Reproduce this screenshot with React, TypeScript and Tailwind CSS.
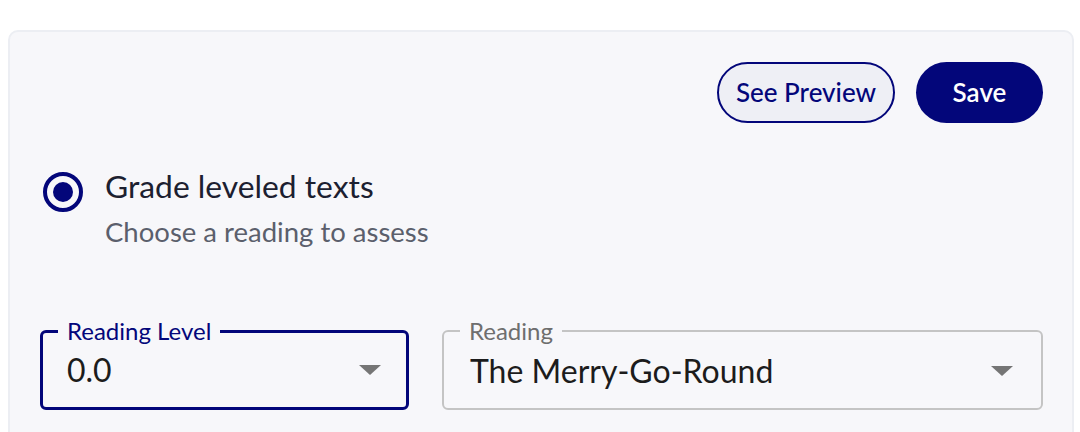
import React from "react";

function Caret() {
  return (
    <svg width="24" height="12" viewBox="0 0 24 12" className="shrink-0">
      <path d="M1 1 L23 1 L12 11 Z" fill="#757575" />
    </svg>
  );
}

export default function App() {
  return (
    <div className="w-[1080px] h-[432px] bg-white overflow-hidden" style={{ fontFamily: "Lato, 'Noto Sans', sans-serif" }}>
      <div className="mt-[30px] ml-[8px] mr-[6px] h-[420px] rounded-[10px] border-2 border-[#eceef3] bg-[#f7f7fa] pl-[30px] pr-[29px] pt-[30px]">
        <div className="flex justify-end gap-[21px]">
          <button className="h-[61px] w-[178px] rounded-full border-2 border-[#03067a] bg-[#eeeff5] text-[26px] font-medium text-[#03067a]">
            See Preview
          </button>
          <button className="h-[61px] w-[127px] rounded-full bg-[#03067a] text-[26px] font-semibold text-white">
            Save
          </button>
        </div>
        <div className="mt-[43px] flex items-start gap-[22px] pl-[3px]">
          <div className="mt-[6px] flex h-[40px] w-[40px] items-center justify-center rounded-full border-[4px] border-[#03067a]">
            <div className="h-[20px] w-[20px] rounded-full bg-[#03067a]" />
          </div>
          <div className="flex flex-col">
            <div className="text-[31.8px] leading-[40px] text-[#1c2030]">Grade leveled texts</div>
            <div className="mt-[11px] text-[27.5px] leading-[30px] text-[#5b5f6c]">Choose a reading to assess</div>
          </div>
        </div>
        <div className="mt-[72px] flex gap-[33px]">
          <fieldset className="h-[91px] w-[369px] rounded-[6px] border-[3px] border-[#03067a] pl-[24px] pr-[24px]">
            <legend className="ml-[-9px] px-[9px] text-[24px] leading-[24px] text-[#03067a]">Reading Level</legend>
            <div className="flex items-center justify-between pt-[9px]">
              <span className="text-[32px] leading-[36px] text-[#1c1c1c]">0.0</span>
              <Caret />
            </div>
          </fieldset>
          <fieldset className="h-[91px] w-[601px] rounded-[6px] border-2 border-[#c4c4c4] px-[26px]">
            <legend className="ml-[-10px] px-[9px] text-[24px] leading-[24px] text-[#6e6e6e]">Reading</legend>
            <div className="flex items-center justify-between pt-[10px] pr-[1px]">
              <span className="text-[32px] leading-[36px] text-[#1c1c1c]">The Merry-Go-Round</span>
              <Caret />
            </div>
          </fieldset>
        </div>
      </div>
    </div>
  );
}
